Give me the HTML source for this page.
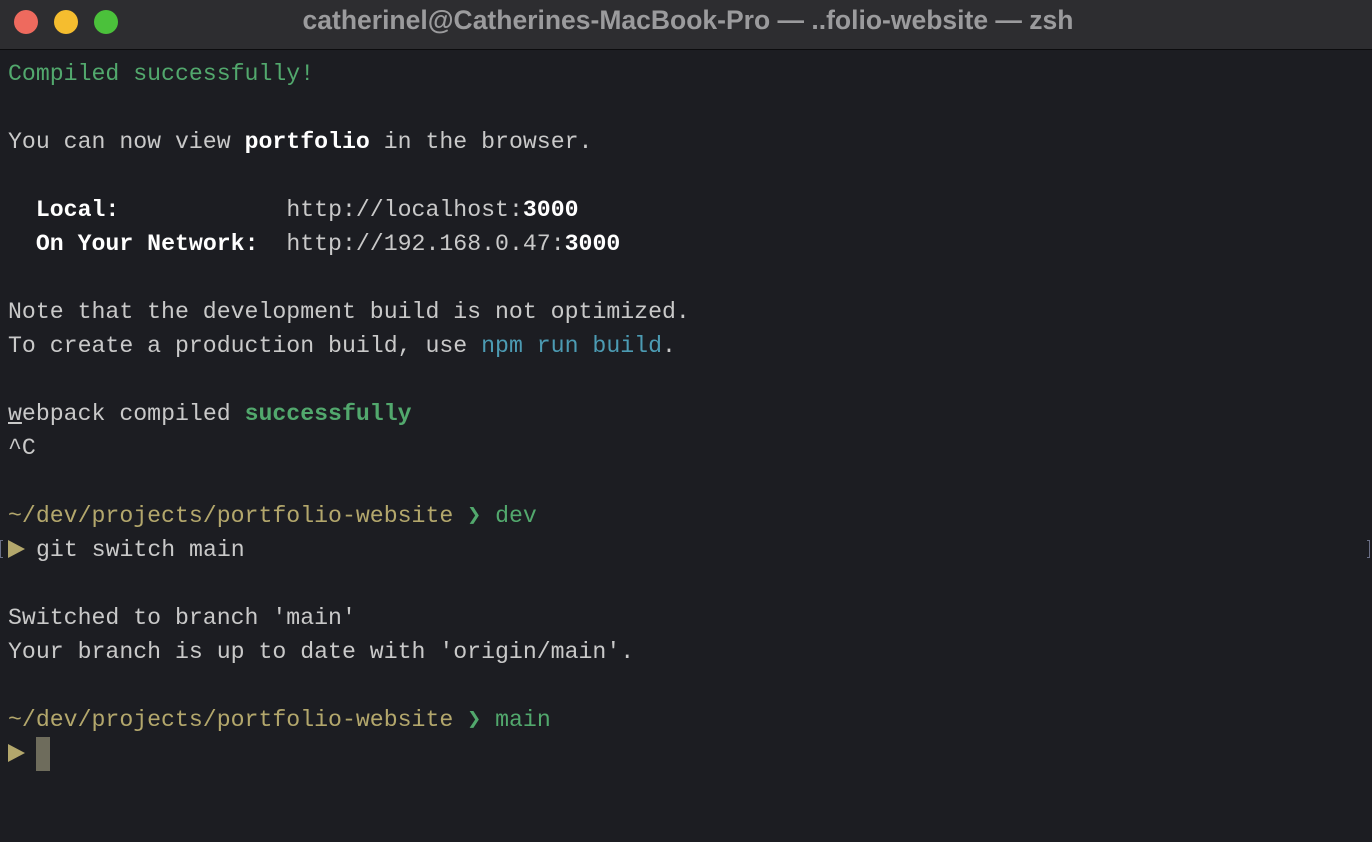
<!DOCTYPE html>
<html><head><style>
html,body{margin:0;padding:0;width:1372px;height:842px;background:#1c1d22;overflow:hidden}
.tb{position:absolute;left:0;top:0;width:1372px;height:50px;background:#2d2d30;border-bottom:1px solid #0c0c0e;box-sizing:border-box}
.dot{position:absolute;top:10px;width:24px;height:24px;border-radius:50%}
.title{position:absolute;left:0;right:0;top:5px;text-align:center;font:bold 26.5px "Liberation Sans",sans-serif;color:#9b9b9d;padding-left:4px}
.term{position:absolute;left:8px;top:57px;font-family:"Liberation Mono",monospace;font-size:23.2px;line-height:34px;color:#c9c9c9;white-space:pre}
.g{color:#52a86d}.y{color:#b3a76c}.b{color:#4c9bb3}.w{color:#fff;font-weight:bold}
.cur{display:inline-block;width:14px;height:34px;background:#6e6c5c;vertical-align:top}
.tri{display:inline-block;width:0;height:0;border-top:9px solid transparent;border-bottom:9px solid transparent;border-left:17px solid #b3a76c;vertical-align:-2px;margin-right:11px}
</style></head><body>
<div class="tb">
<div class="dot" style="left:14px;background:#ee6a5e"></div>
<div class="dot" style="left:54px;background:#f5bd2f"></div>
<div class="dot" style="left:94px;background:#4bc13b"></div>
<div class="title">catherinel@Catherines-MacBook-Pro — ..folio-website — zsh</div>
</div>
<div style="position:absolute;left:0;top:540px;width:3px;height:18px;border:1px solid #6a6f86;border-right:none;box-sizing:border-box"></div>
<div style="position:absolute;left:1367px;top:540px;width:3px;height:18px;border:1px solid #6a6f86;border-left:none;box-sizing:border-box"></div>
<div class="term"><span class="g">Compiled successfully!</span>

You can now view <span class="w">portfolio</span> in the browser.

  <span class="w">Local:</span>            http://localhost:<span class="w">3000</span>
  <span class="w">On Your Network:</span>  http://192.168.0.47:<span class="w">3000</span>

Note that the development build is not optimized.
To create a production build, use <span class="b">npm run build</span>.

<span style="text-decoration:underline">w</span>ebpack compiled <span class="g" style="font-weight:bold">successfully</span>
^C

<span class="y">~/dev/projects/portfolio-website</span> <span class="g">❯ dev</span>
<span class="tri"></span>git switch main

Switched to branch 'main'
Your branch is up to date with 'origin/main'.

<span class="y">~/dev/projects/portfolio-website</span> <span class="g">❯ main</span>
<span class="tri"></span><span class="cur"></span></div>
</body></html>
